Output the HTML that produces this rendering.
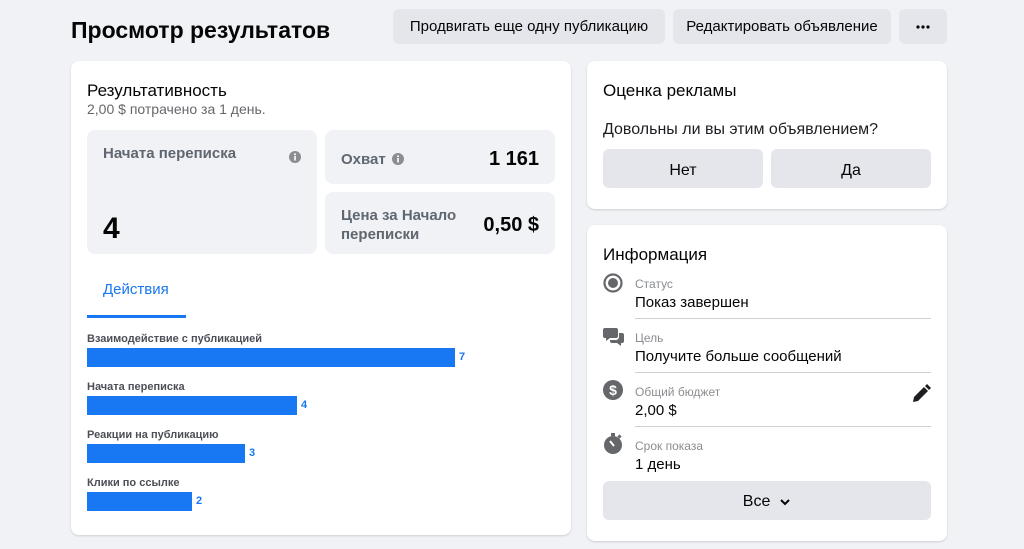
<!DOCTYPE html>
<html><head><meta charset="utf-8"><style>
*{box-sizing:border-box;margin:0;padding:0}
body{width:1024px;height:549px;background:#f0f2f5;font-family:"Liberation Sans","DejaVu Sans",sans-serif;color:#050505;position:relative;overflow:hidden}
.a{position:absolute}
.card{position:absolute;background:#fff;border-radius:8px;box-shadow:0 1px 2px rgba(0,0,0,.15)}
.btn{position:absolute;background:#e4e6eb;border-radius:6px;font-size:15px;display:flex;align-items:center;justify-content:center;color:#050505}
.box{position:absolute;background:#f0f2f5;border-radius:8px}
.lbl{position:absolute;left:87px;font-size:11px;font-weight:bold;color:#4b4f56}
.bar{position:absolute;left:87px;height:19px;background:#1877f2}
.num{position:absolute;font-size:11px;font-weight:bold;color:#1877f2}
.rl{position:absolute;left:635px;font-size:12px;color:#8a8d91}
.rv{position:absolute;left:635px;font-size:15px;color:#050505}
.hr{position:absolute;left:635px;width:296px;height:1px;background:#ced0d4}
.ic{position:absolute;left:603px}
</style></head><body>
<div class="a" style="left:71px;top:17px;font-size:23px;font-weight:bold">Просмотр результатов</div>
<div class="btn" style="left:393px;top:9px;width:272px;height:35px">Продвигать еще одну публикацию</div>
<div class="btn" style="left:673px;top:9px;width:218px;height:35px">Редактировать объявление</div>
<div class="btn" style="left:899px;top:9px;width:48px;height:35px"><svg width="14" height="4" viewBox="0 0 14 4"><circle cx="2" cy="2" r="1.6" fill="#050505"/><circle cx="7" cy="2" r="1.6" fill="#050505"/><circle cx="12" cy="2" r="1.6" fill="#050505"/></svg></div>

<div class="card" style="left:71px;top:61px;width:500px;height:474px"></div>
<div class="a" style="left:87px;top:81px;font-size:17px">Результативность</div>
<div class="a" style="left:87px;top:101px;font-size:14px;color:#65676b">2,00 $ потрачено за 1 день.</div>
<div class="box" style="left:87px;top:130px;width:230px;height:124px"></div>
<div class="a" style="left:103px;top:145px;font-size:15px;font-weight:bold;color:#606770">Начата переписка</div>
<svg class="a" style="left:289px;top:151px" width="12" height="12" viewBox="0 0 12 12"><circle cx="6" cy="6" r="6" fill="#8a8d91"/><rect x="5.2" y="5" width="1.6" height="4.5" fill="#fff"/><circle cx="6" cy="3.3" r="1" fill="#fff"/></svg>
<div class="a" style="left:103px;top:212px;font-size:30px;font-weight:bold">4</div>
<div class="box" style="left:325px;top:130px;width:230px;height:54px"></div>
<div class="a" style="left:341px;top:151px;font-size:15px;font-weight:bold;color:#606770">Охват</div>
<svg class="a" style="left:392px;top:153px" width="12" height="12" viewBox="0 0 12 12"><circle cx="6" cy="6" r="6" fill="#8a8d91"/><rect x="5.2" y="5" width="1.6" height="4.5" fill="#fff"/><circle cx="6" cy="3.3" r="1" fill="#fff"/></svg>
<div class="a" style="left:440px;top:148px;width:99px;text-align:right;font-size:20px;font-weight:bold">1 161</div>
<div class="box" style="left:325px;top:192px;width:230px;height:62px"></div>
<div class="a" style="left:341px;top:206px;font-size:15px;font-weight:bold;color:#606770;line-height:19px">Цена за Начало<br>переписки</div>
<div class="a" style="left:440px;top:214px;width:99px;text-align:right;font-size:20px;font-weight:bold">0,50 $</div>
<div class="a" style="left:103px;top:281px;font-size:15px;color:#1877f2">Действия</div>
<div class="a" style="left:87px;top:315px;width:99px;height:3px;background:#1877f2"></div>

<div class="lbl" style="top:333px">Взаимодействие с публикацией</div>
<div class="bar" style="top:348px;width:368px"></div><div class="num" style="left:459px;top:351px">7</div>
<div class="lbl" style="top:381px">Начата переписка</div>
<div class="bar" style="top:396px;width:210px"></div><div class="num" style="left:301px;top:399px">4</div>
<div class="lbl" style="top:429px">Реакции на публикацию</div>
<div class="bar" style="top:444px;width:158px"></div><div class="num" style="left:249px;top:447px">3</div>
<div class="lbl" style="top:477px">Клики по ссылке</div>
<div class="bar" style="top:492px;width:105px"></div><div class="num" style="left:196px;top:495px">2</div>

<div class="card" style="left:587px;top:61px;width:360px;height:148px"></div>
<div class="a" style="left:603px;top:81px;font-size:17px">Оценка рекламы</div>
<div class="a" style="left:603px;top:121px;font-size:16px;color:#1c1e21">Довольны ли вы этим объявлением?</div>
<div class="btn" style="left:603px;top:149px;width:160px;height:39px;font-size:16px;padding-top:4px">Нет</div>
<div class="btn" style="left:771px;top:149px;width:160px;height:39px;font-size:16px;padding-top:4px">Да</div>

<div class="card" style="left:587px;top:225px;width:360px;height:316px"></div>
<div class="a" style="left:603px;top:245px;font-size:17px">Информация</div>

<svg class="ic" style="top:273px" width="20" height="20" viewBox="0 0 20 20"><circle cx="10" cy="10" r="8.5" fill="none" stroke="#65676b" stroke-width="2.2"/><circle cx="10" cy="10" r="5" fill="#65676b"/></svg>
<div class="rl" style="top:277px">Статус</div><div class="rv" style="top:294px">Показ завершен</div>
<div class="hr" style="top:318px"></div>

<svg class="ic" style="top:327px" width="22" height="20" viewBox="0 0 22 20"><path d="M2 1h11a2 2 0 0 1 2 2v6a2 2 0 0 1-2 2H7l-4 3v-3H2a2 2 0 0 1-2-2V3a2 2 0 0 1 2-2z" fill="#65676b"/><path d="M16 6h3a2 2 0 0 1 2 2v6a2 2 0 0 1-2 2h-1v3l-4-3h-5a2 2 0 0 1-2-2v-1h6a3 3 0 0 0 3-3z" fill="#65676b"/></svg>
<div class="rl" style="top:331px">Цель</div><div class="rv" style="top:348px">Получите больше сообщений</div>
<div class="hr" style="top:372px"></div>

<svg class="ic" style="top:380px" width="20" height="20" viewBox="0 0 20 20"><circle cx="10" cy="10" r="10" fill="#65676b"/><text x="10" y="15" font-size="14" font-weight="bold" fill="#fff" text-anchor="middle" font-family="Liberation Sans">$</text></svg>
<div class="rl" style="top:385px">Общий бюджет</div><div class="rv" style="top:402px">2,00 $</div>
<svg class="a" style="left:911px;top:384px" width="20" height="20" viewBox="0 0 20 20"><path d="M2 18l1-5L13 3l4 4L7 17z" fill="#1c1e21"/><path d="M14 2l2-2 4 4-2 2z" fill="#1c1e21"/></svg>
<div class="hr" style="top:426px"></div>

<svg class="ic" style="top:433px" width="20" height="22" viewBox="0 0 20 22"><circle cx="10" cy="12" r="9" fill="#65676b"/><rect x="8" y="0" width="4" height="3" fill="#65676b"/><rect x="15" y="2" width="3" height="3" transform="rotate(45 16.5 3.5)" fill="#65676b"/><path d="M7 8l4 5" stroke="#fff" stroke-width="2"/></svg>
<div class="rl" style="top:439px">Срок показа</div><div class="rv" style="top:456px">1 день</div>

<div class="btn" style="left:603px;top:481px;width:328px;height:39px;font-size:16px;padding-top:3px">Все&nbsp;&nbsp;<svg width="12" height="8" viewBox="0 0 12 8"><path d="M2 2l4 4 4-4" fill="none" stroke="#050505" stroke-width="2"/></svg></div>
</body></html>
